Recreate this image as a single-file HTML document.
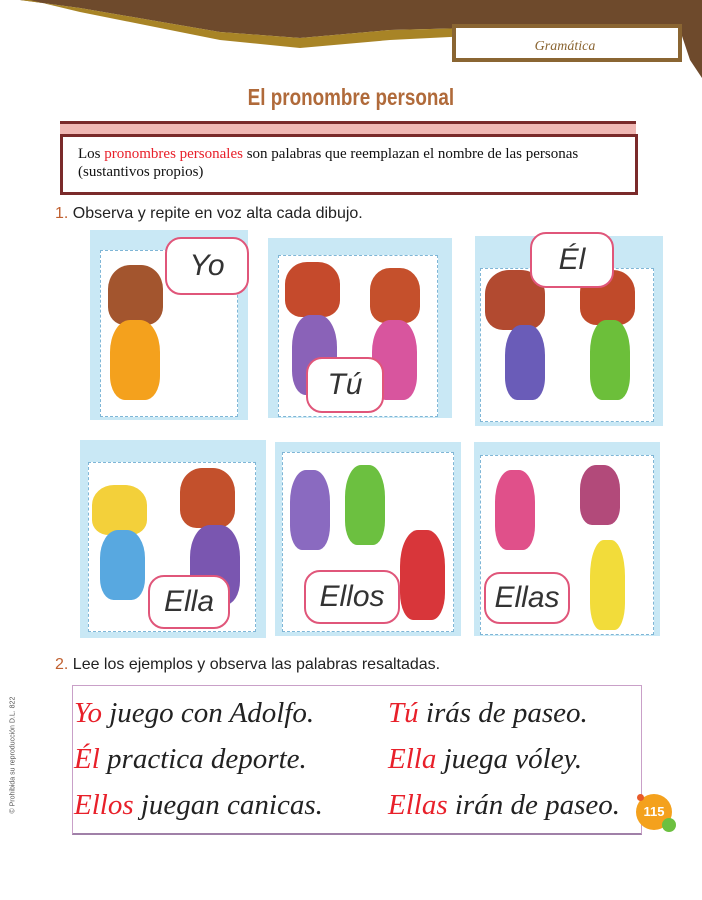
<!DOCTYPE html>
<html><head><meta charset="utf-8"><style>
body{margin:0;width:702px;height:900px;position:relative;background:#fff;overflow:hidden;font-family:"Liberation Sans",sans-serif}
.abs{position:absolute}
.panel{position:absolute;background:#c9e8f5}
.inner{position:absolute;background:#fff;border:1px dashed #7fb6d6}
.bub{position:absolute;background:#fff;border:2px solid #e0567a;border-radius:16px;font-size:30px;color:#333;text-align:center;font-style:italic}
.kid{position:absolute;border-radius:40% 40% 30% 30%}
.row{position:absolute;font-family:"Liberation Serif",serif;font-style:italic;font-size:29px;color:#222}
.r{color:#e8202a}
</style></head><body>
<svg class="abs" style="left:0;top:0" width="702" height="90">
<path d="M20 0 L702 0 L702 78 L690 60 L680 30 L470 28 L390 30 L300 38 L220 32 L150 20 L80 8 Z" fill="#6e4a2c"/>
<path d="M20 0 L80 8 L150 20 L220 32 L300 38 L390 30 L470 28 L470 36 L390 40 L300 48 L220 40 L150 26 L80 12 L30 0Z" fill="#a88426"/>
<rect x="454" y="26" width="226" height="34" fill="#fff" stroke="#8a6532" stroke-width="4"/>
<text x="565" y="50" font-family="Liberation Serif" font-style="italic" font-size="14" fill="#8a6532" text-anchor="middle">Gramática</text>
</svg>
<div class="abs" style="left:0;top:84px;width:702px;text-align:center;font-size:23px;font-weight:bold;color:#b06a3a"><span style="display:inline-block;transform:scaleX(0.82)">El pronombre personal</span></div>
<div class="abs" style="left:60px;top:121px;width:576px;height:12px;background:#f0b8b4;border-top:3px solid #7a2a2a"></div>
<div class="abs" style="left:60px;top:134px;width:572px;height:55px;border:3px solid #7a2a2a;background:#fff"></div>
<div class="abs" style="left:78px;top:145px;width:505px;font-family:'Liberation Serif',serif;font-size:15px;line-height:18px;color:#111">Los <span style="color:#e8202a">pronombres personales</span> son palabras que reemplazan el nombre de las personas (sustantivos propios)</div>
<div class="abs" style="left:55px;top:205px;font-size:16px;color:#222"><span style="color:#c06030">1.</span> Observa y repite en voz alta cada dibujo.</div>

<div class="panel" style="left:90px;top:230px;width:158px;height:190px"></div><div class="inner" style="left:100px;top:250px;width:136px;height:165px"></div>
<div class="panel" style="left:268px;top:238px;width:184px;height:180px"></div><div class="inner" style="left:278px;top:255px;width:158px;height:160px"></div>
<div class="panel" style="left:475px;top:236px;width:188px;height:190px"></div><div class="inner" style="left:480px;top:268px;width:172px;height:152px"></div>
<div class="panel" style="left:80px;top:440px;width:186px;height:198px"></div><div class="inner" style="left:88px;top:462px;width:166px;height:168px"></div>
<div class="panel" style="left:275px;top:442px;width:186px;height:194px"></div><div class="inner" style="left:282px;top:452px;width:170px;height:178px"></div>
<div class="panel" style="left:474px;top:442px;width:186px;height:194px"></div><div class="inner" style="left:480px;top:455px;width:172px;height:178px"></div>

<div class="kid" style="left:108px;top:265px;width:55px;height:60px;background:#a3552e"></div>
<div class="kid" style="left:110px;top:320px;width:50px;height:80px;background:#f4a11d"></div>
<div class="kid" style="left:285px;top:262px;width:55px;height:55px;background:#c54a2c"></div>
<div class="kid" style="left:292px;top:315px;width:45px;height:80px;background:#8a62b8"></div>
<div class="kid" style="left:370px;top:268px;width:50px;height:55px;background:#c5502c"></div>
<div class="kid" style="left:372px;top:320px;width:45px;height:80px;background:#d8559e"></div>
<div class="kid" style="left:485px;top:270px;width:60px;height:60px;background:#b24a30"></div>
<div class="kid" style="left:505px;top:325px;width:40px;height:75px;background:#6a5cb8"></div>
<div class="kid" style="left:580px;top:270px;width:55px;height:55px;background:#c04a2a"></div>
<div class="kid" style="left:590px;top:320px;width:40px;height:80px;background:#6cbf3a"></div>
<div class="kid" style="left:92px;top:485px;width:55px;height:50px;background:#f3d03a"></div>
<div class="kid" style="left:100px;top:530px;width:45px;height:70px;background:#58a8e0"></div>
<div class="kid" style="left:180px;top:468px;width:55px;height:60px;background:#c3502c"></div>
<div class="kid" style="left:190px;top:525px;width:50px;height:80px;background:#7a56b0"></div>
<div class="kid" style="left:290px;top:470px;width:40px;height:80px;background:#8a6ac0"></div>
<div class="kid" style="left:345px;top:465px;width:40px;height:80px;background:#6cc040"></div>
<div class="kid" style="left:400px;top:530px;width:45px;height:90px;background:#d8363a"></div>
<div class="kid" style="left:495px;top:470px;width:40px;height:80px;background:#e0508a"></div>
<div class="kid" style="left:580px;top:465px;width:40px;height:60px;background:#b24a7a"></div>
<div class="kid" style="left:590px;top:540px;width:35px;height:90px;background:#f2dc3a"></div>

<div class="bub" style="left:165px;top:237px;width:80px;height:54px;line-height:54px">Yo</div>
<div class="bub" style="left:306px;top:357px;width:74px;height:52px;line-height:52px">Tú</div>
<div class="bub" style="left:530px;top:232px;width:80px;height:52px;line-height:52px">Él</div>
<div class="bub" style="left:148px;top:575px;width:78px;height:50px;line-height:50px">Ella</div>
<div class="bub" style="left:304px;top:570px;width:92px;height:50px;line-height:50px">Ellos</div>
<div class="bub" style="left:484px;top:572px;width:82px;height:48px;line-height:48px">Ellas</div>

<div class="abs" style="left:55px;top:656px;font-size:16px;color:#222"><span style="color:#c06030">2.</span> Lee los ejemplos y observa las palabras resaltadas.</div>
<div class="abs" style="left:72px;top:685px;width:568px;height:147px;border:1px solid #c9a0c8;border-bottom:2px solid #a080a8"></div>
<div class="row" style="left:74px;top:697px"><span class="r">Yo</span> juego con Adolfo.</div>
<div class="row" style="left:74px;top:743px"><span class="r">Él</span> practica deporte.</div>
<div class="row" style="left:74px;top:789px"><span class="r">Ellos</span> juegan canicas.</div>
<div class="row" style="left:388px;top:697px"><span class="r">Tú</span> irás de paseo.</div>
<div class="row" style="left:388px;top:743px"><span class="r">Ella</span> juega vóley.</div>
<div class="row" style="left:388px;top:789px"><span class="r">Ellas</span> irán de paseo.</div>
<div class="abs" style="left:-52px;top:745px;width:130px;transform:rotate(-90deg);font-size:7px;color:#555;white-space:nowrap">© Prohibida su reproducción D.L. 822</div>
<div class="abs" style="left:636px;top:794px;width:36px;height:36px;border-radius:50%;background:#f4a11d;color:#fff;font-weight:bold;font-size:13px;line-height:36px;text-align:center">115</div>
<div class="abs" style="left:662px;top:818px;width:14px;height:14px;border-radius:50%;background:#6cc040"></div>
<div class="abs" style="left:637px;top:794px;width:7px;height:7px;border-radius:50%;background:#e85a2a"></div>
</body></html>
